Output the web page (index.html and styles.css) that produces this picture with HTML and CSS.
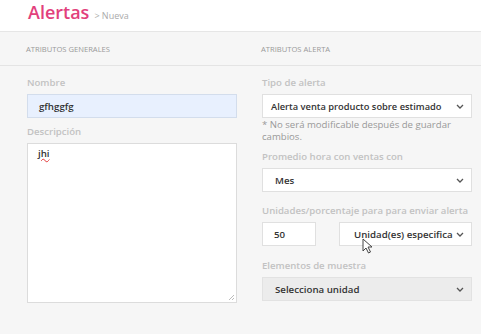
FILE: index.html
```html
<!DOCTYPE html>
<html lang="es">
<head>
    <meta charset="UTF-8">
    <meta name="viewport" content="width=device-width, initial-scale=1.0">
    <title>Alertas - Nueva</title>
    <link rel="stylesheet" href="styles.css">
</head>
<body>
    <!-- Page title -->
    <header class="page-title">
        <h1>Alertas</h1>
        <span class="crumb">&gt; Nueva</span>
    </header>

    <main class="panel">
        <!-- Section headings -->
        <div class="section-heads">
            <div class="section-head">Atributos generales</div>
            <div class="section-head">Atributos alerta</div>
        </div>

        <div class="form-cols">
            <!-- Left column -->
            <div class="col">
                <div class="field">
                    <label class="label">Nombre</label>
                    <div class="input input-filled">gfhggfg</div>
                </div>
                <div class="field field-gap-sm">
                    <label class="label">Descripción</label>
                    <div class="textarea">
                        <span class="misspelled">jhi</span>
                        <svg class="grip" width="7" height="7" viewBox="0 0 7 7">
                            <path d="M6 1 L1 6 M6 4 L4 6" stroke="#bbb" stroke-width="1" fill="none"/>
                        </svg>
                    </div>
                </div>
            </div>

            <!-- Right column -->
            <div class="col">
                <div class="field">
                    <label class="label">Tipo de alerta</label>
                    <div class="select select-tight">
                        <span>Alerta venta producto sobre estimado</span>
                        <svg class="chevron" width="8" height="5" viewBox="0 0 8 5"><path d="M1 1 L4 4 L7 1" stroke="#555" stroke-width="1.3" fill="none"/></svg>
                    </div>
                    <p class="note">* No será modificable después de guardar cambios.</p>
                </div>
                <div class="field field-gap-note">
                    <label class="label">Promedio hora con ventas con</label>
                    <div class="select">
                        <span>Mes</span>
                        <svg class="chevron" width="8" height="5" viewBox="0 0 8 5"><path d="M1 1 L4 4 L7 1" stroke="#555" stroke-width="1.3" fill="none"/></svg>
                    </div>
                </div>
                <div class="field field-gap-md">
                    <label class="label">Unidades/porcentaje para para enviar alerta</label>
                    <div class="row">
                        <div class="input input-small">50</div>
                        <div class="select select-grow">
                            <span>Unidad(es) especifica</span>
                            <svg class="chevron" width="8" height="5" viewBox="0 0 8 5"><path d="M1 1 L4 4 L7 1" stroke="#555" stroke-width="1.3" fill="none"/></svg>
                            <svg class="cursor" width="11" height="16" viewBox="0 0 11 16">
                                <path d="M1 1 L1 13 L4 10 L6.5 15 L8.5 14 L6 9 L10 9 Z" fill="#fff" stroke="#444" stroke-width="1"/>
                            </svg>
                        </div>
                    </div>
                </div>
                <div class="field field-gap-lg">
                    <label class="label">Elementos de muestra</label>
                    <div class="select select-disabled">
                        <span>Selecciona unidad</span>
                        <svg class="chevron" width="8" height="5" viewBox="0 0 8 5"><path d="M1 1 L4 4 L7 1" stroke="#555" stroke-width="1.3" fill="none"/></svg>
                    </div>
                </div>
            </div>
        </div>
    </main>
</body>
</html>
```

FILE: styles.css
```css
body {
    font-family: "Open Sans", "Noto Sans", Arial, sans-serif;
    margin: 0;
    padding: 0;
    background-color: #fff;
    color: #333;
}

/* Title */
.page-title {
    height: 31px;
    padding-left: 28px;
    display: flex;
    align-items: baseline;
    gap: 5px;
    box-sizing: border-box;
    padding-top: 1px;
}

.page-title h1 {
    margin: 0;
    font-size: 18px;
    line-height: 22px;
    font-weight: 600;
    color: #e2407c;
}

.crumb {
    font-size: 9px;
    color: #aaa;
}

/* Panel */
.panel {
    background-color: #f6f6f6;
    border-top: 1px solid #e6e6e6;
    min-height: 302px;
}

.section-heads {
    display: grid;
    grid-template-columns: 210px 210px;
    column-gap: 25px;
    padding-left: 26px;
    height: 33px;
    align-items: center;
    border-bottom: 1px solid #e4e4e4;
}

.section-head {
    font-size: 7.6px;
    text-transform: uppercase;
    color: #9a9a9a;
    padding-top: 1px;
}

.form-cols {
    display: grid;
    grid-template-columns: 210px 210px;
    column-gap: 25px;
    padding-left: 27px;
    padding-top: 11px;
}

/* Fields */
.field-gap-sm { margin-top: 8px; }
.field-gap-note { margin-top: 8px; }
.field-gap-md { margin-top: 13px; }
.field-gap-lg { margin-top: 14px; }

.label {
    display: block;
    font-size: 9.6px;
    line-height: 12px;
    font-weight: 600;
    color: #c2c2c2;
    margin-bottom: 5px;
    white-space: nowrap;
}

.input,
.select {
    height: 24px;
    box-sizing: border-box;
    border: 1px solid #e0e0e0;
    background-color: #fff;
    font-size: 9.7px;
    font-weight: 600;
    color: #333;
    display: flex;
    align-items: center;
    padding-left: 11px;
}

.input-filled {
    background-color: #e8f0fe;
    border-color: #d3ddec;
}

.input-small {
    width: 54px;
    padding-left: 11px;
}

.select {
    position: relative;
    padding-left: 12px;
    padding-right: 7px;
    justify-content: space-between;
}

.select-tight {
    padding-left: 8px;
    font-size: 9.3px;
}

.select-grow {
    flex: 1;
    padding-left: 14px;
}

.select-disabled {
    background-color: #ececec;
    border-color: #e2e2e2;
}

.chevron {
    flex-shrink: 0;
}

.row {
    display: flex;
    gap: 23px;
}

.textarea {
    position: relative;
    height: 160px;
    box-sizing: border-box;
    border: 1px solid #dcdcdc;
    background-color: #fff;
    padding: 3px 10px;
    font-size: 9.7px;
    font-weight: 600;
    color: #333;
}

.misspelled {
    text-decoration: underline wavy #e23a3a;
    text-decoration-thickness: 1px;
}

.grip {
    position: absolute;
    right: 1px;
    bottom: 1px;
}

.note {
    margin: 1px 0 0 0;
    font-size: 9.6px;
    line-height: 12px;
    color: #999;
}

/* Mouse pointer over the select */
.cursor {
    position: absolute;
    left: 22px;
    top: 15px;
}
```
